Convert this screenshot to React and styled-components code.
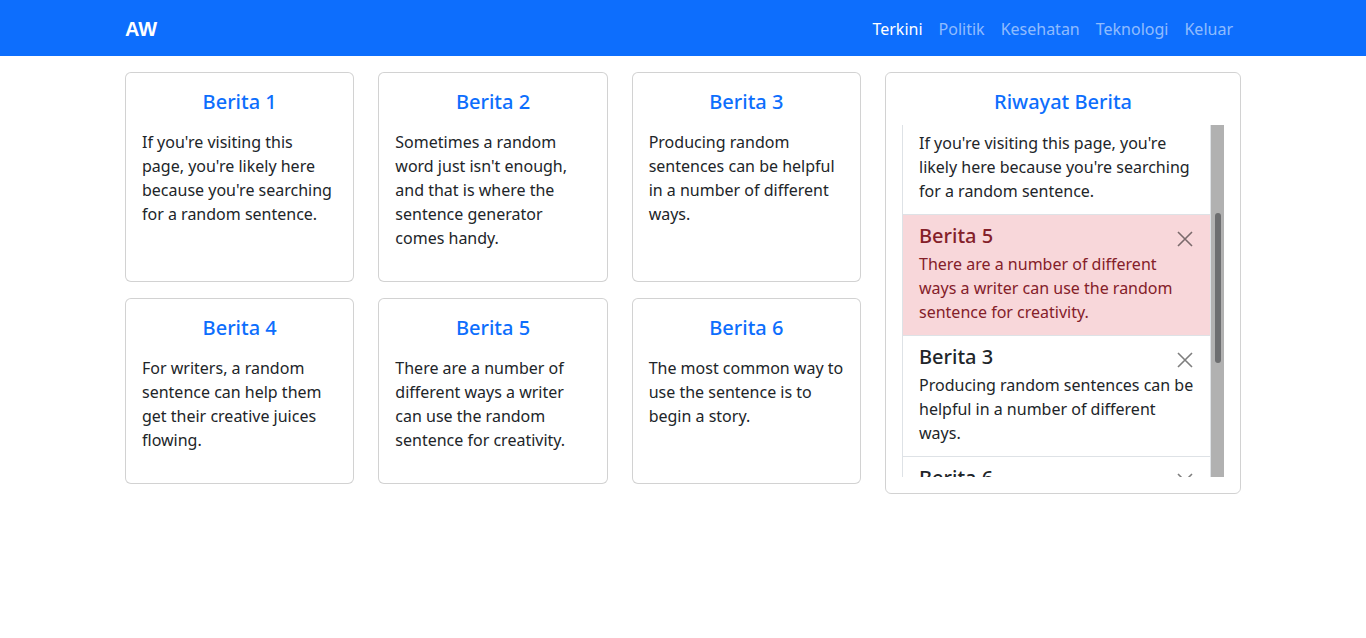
import React, { useLayoutEffect, useRef } from 'react';
import styled, { createGlobalStyle } from 'styled-components';

const news = [
  {
    id: 1,
    title: 'Berita 1',
    text: "If you're visiting this page, you're likely here because you're searching for a random sentence.",
  },
  {
    id: 2,
    title: 'Berita 2',
    text: "Sometimes a random word just isn't enough, and that is where the sentence generator comes handy.",
  },
  {
    id: 3,
    title: 'Berita 3',
    text: 'Producing random sentences can be helpful in a number of different ways.',
  },
  {
    id: 4,
    title: 'Berita 4',
    text: 'For writers, a random sentence can help them get their creative juices flowing.',
  },
  {
    id: 5,
    title: 'Berita 5',
    text: 'There are a number of different ways a writer can use the random sentence for creativity.',
  },
  {
    id: 6,
    title: 'Berita 6',
    text: 'The most common way to use the sentence is to begin a story.',
  },
];

const menu = ['Terkini', 'Politik', 'Kesehatan', 'Teknologi', 'Keluar'];

// urutan riwayat; Berita 1 sedang dibuka jadi tidak bisa dihapus
const history = [2, 1, 5, 3, 6, 4];
const openId = 1;

const CloseIcon = () => (
  <svg width="16" height="16" viewBox="0 0 16 16" fill="none">
    <path d="M1 1L15 15M15 1L1 15" stroke="currentColor" strokeWidth="1.6" />
  </svg>
);

const HistoryList = () => {
  const ref = useRef(null);

  useLayoutEffect(() => {
    // scroll supaya judul Berita 1 tertutup, seperti di tangkapan layar
    const el = ref.current;
    if (!el) return;
    const target = el.querySelector('[data-id="1"]');
    if (target) el.scrollTop = target.offsetTop + 31;
  }, []);

  return (
    <HistoryBox>
      <Scroller ref={ref}>
        {history.map((id) => {
          const item = news.find((n) => n.id === id);
          return (
            <HistoryItem key={id} data-id={id} $danger={id === 5}>
              <HistoryHead>
                <HistoryTitle>{item.title}</HistoryTitle>
                {id !== openId && (
                  <CloseButton type="button" aria-label="Close">
                    <CloseIcon />
                  </CloseButton>
                )}
              </HistoryHead>
              <HistoryText>{item.text}</HistoryText>
            </HistoryItem>
          );
        })}
      </Scroller>
      <Track>
        <Thumb />
      </Track>
    </HistoryBox>
  );
};

const App = () => {
  return (
    <>
      <GlobalStyle />
      <Navbar>
        <NavInner>
          <Brand>AW</Brand>
          <NavLinks>
            {menu.map((m, i) => (
              <NavLink key={m} $active={i === 0}>
                {m}
              </NavLink>
            ))}
          </NavLinks>
        </NavInner>
      </Navbar>
      <Main>
        <CardGrid>
          {news.map((n) => (
            <Card key={n.id}>
              <CardTitle>{n.title}</CardTitle>
              <CardText>{n.text}</CardText>
            </Card>
          ))}
        </CardGrid>
        <SideCard>
          <SideTitle>Riwayat Berita</SideTitle>
          <HistoryList />
        </SideCard>
      </Main>
    </>
  );
};

const GlobalStyle = createGlobalStyle`
  * {
    box-sizing: border-box;
  }
  body {
    margin: 0;
    background: #fff;
    color: #212529;
    font-family: "Noto Sans", "Liberation Sans", sans-serif;
    font-size: 16px;
    line-height: 1.5;
  }
`;

const Navbar = styled.nav`
  background-color: #0d6efd;
  height: 56px;
  padding-top: 2px;
  display: flex;
  align-items: center;
`;
const NavInner = styled.div`
  width: 1116px;
  margin: 0 auto;
  display: flex;
  align-items: center;
  justify-content: space-between;
`;
const Brand = styled.a`
  font-family: "Liberation Sans", Arial, sans-serif;
  font-size: 20px;
  font-weight: 700;
  color: #fff;
  line-height: 30px;
`;
const NavLinks = styled.div`
  display: flex;
`;
const NavLink = styled.a`
  padding: 8px;
  font-size: 16px;
  color: ${(p) => (p.$active ? '#fff' : 'rgba(255, 255, 255, 0.55)')};
  cursor: pointer;
`;

const Main = styled.main`
  width: 1116px;
  margin: 16px auto 0;
  display: grid;
  grid-template-columns: 736px 356px;
  column-gap: 24px;
  align-items: start;
`;
const CardGrid = styled.div`
  display: grid;
  grid-template-columns: repeat(3, 1fr);
  column-gap: 24px;
  row-gap: 16px;
`;
const Card = styled.div`
  border: 1px solid rgba(0, 0, 0, 0.175);
  border-radius: 6px;
  padding: 17px 16px 15px;
  background: #fff;
`;
const CardTitle = styled.h5`
  margin: 0 0 16px;
  font-size: 20px;
  font-weight: 500;
  line-height: 24px;
  text-align: center;
  color: #0d6efd;
`;
const CardText = styled.p`
  margin: 0 0 16px;
`;

const SideCard = styled.div`
  border: 1px solid rgba(0, 0, 0, 0.175);
  border-radius: 6px;
  padding: 17px 16px 16px;
`;
const SideTitle = styled.h5`
  margin: 0 0 11px;
  font-size: 20px;
  font-weight: 500;
  line-height: 24px;
  text-align: center;
  color: #0d6efd;
`;
const HistoryBox = styled.div`
  display: flex;
  height: 352px;
`;
const Scroller = styled.div`
  position: relative;
  flex: 1;
  min-width: 0;
  overflow-y: scroll;
  scrollbar-width: none;

  &::-webkit-scrollbar {
    display: none;
  }
`;
const Track = styled.div`
  width: 13px;
  flex-shrink: 0;
  background: #b1b1b1;
`;
const Thumb = styled.div`
  width: 6px;
  height: 150px;
  margin: 88px auto 0;
  border-radius: 3px;
  background: #6d6e70;
`;
const HistoryItem = styled.div`
  padding: 9px 16px 7px;
  border: 1px solid #dee2e6;
  border-top-width: 0;
  background: ${(p) => (p.$danger ? '#f8d7da' : '#fff')};
  color: ${(p) => (p.$danger ? '#842029' : '#212529')};

  &:first-child {
    border-top-width: 1px;
  }
`;
const HistoryHead = styled.div`
  display: flex;
  align-items: center;
  justify-content: space-between;
  margin-bottom: 4px;
`;
const HistoryTitle = styled.h5`
  margin: 0;
  font-size: 20px;
  font-weight: 500;
  line-height: 24px;
`;
const CloseButton = styled.button`
  border: 0;
  background: transparent;
  padding: 0;
  margin: 6px 1px 0 0;
  width: 16px;
  height: 16px;
  color: #000;
  opacity: 0.5;
  display: flex;
`;
const HistoryText = styled.p`
  margin: 0 0 4px;
`;

export default App;
